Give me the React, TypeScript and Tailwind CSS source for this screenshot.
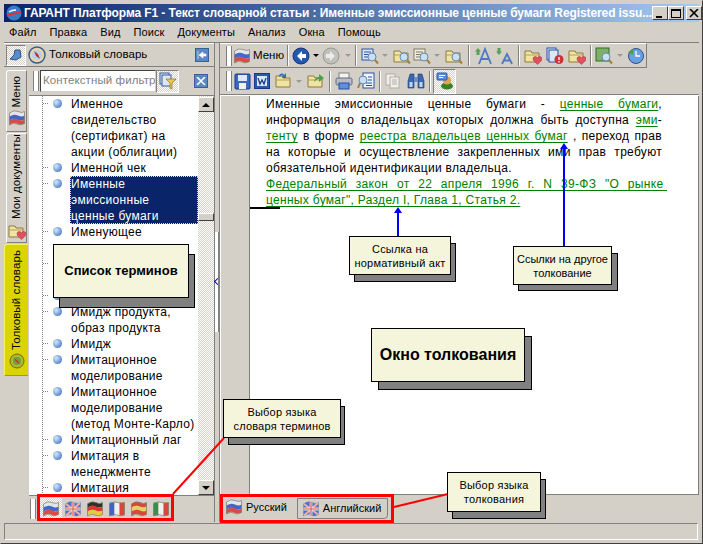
import type { ReactNode } from 'react'

const font = "[font-family:'Liberation_Sans',Arial,sans-serif]"
const dither = 'bg-[repeating-conic-gradient(#d4d0c8_0_25%,#ffffff_0_50%)] bg-[length:2px_2px]'
const outline = 'M.5 3 Q5 -.5 9 1.5 T15.5 1.5 V13.5 Q11 16 8 14 T.5 15 Z'

// wavy flag, stripes top to bottom (or left to right when vertical)
function Flag({ colors, vertical, size = 16 }: { colors: string[]; vertical?: boolean; size?: number }) {
  const wave = (y0: number, y1: number) =>
    `M.5 ${y0 + 1} Q5 ${y0 - 2} 9 ${y0} T15.5 ${y0} V${y1} Q11 ${y1 + 2} 8 ${y1} T.5 ${y1 + 1} Z`
  return (
    <svg width={size} height={size} viewBox="0 0 16 16" className="shrink-0">
      {vertical ? (
        colors.map((c, i) => <rect key={i} x={0.5 + i * 5} y={1.5} width={5} height={13} fill={c} />)
      ) : (
        colors.map((c, i) => <path key={i} d={wave(1.5 + i * 4, 5.5 + i * 4)} fill={c} />)
      )}
      <path d={outline} fill="none" stroke="#7a7a60" strokeWidth=".7" />
    </svg>
  )
}

const RU = ['#e4e4ea', '#3f68c8', '#e04848']

function UKFlag({ size = 16 }: { size?: number }) {
  return (
    <svg width={size} height={size} viewBox="0 0 16 16" className="shrink-0">
      <path d={outline} fill="#4a70c8" stroke="#7080a0" strokeWidth=".6" />
      <path d="M1 3 L15 13.5 M15 2 L1 14.5" stroke="#f0b0a8" strokeWidth="2" />
      <path d="M8 1.5 V14.5 M.5 8 H15.5" stroke="#f4e0d8" strokeWidth="2.8" />
      <path d="M8 1.5 V14.5 M.5 8 H15.5" stroke="#e06058" strokeWidth="1.2" />
    </svg>
  )
}

function Folder({ children }: { children?: ReactNode }) {
  return (
    <svg width="18" height="18" viewBox="0 0 18 18" className="shrink-0">
      <path d="M1 4 H7 L8 6 H15 V15 H1 Z" fill="#f0e4a0" stroke="#8a7a40" />
      <path d="M1 8 H15" stroke="#b0a060" />
      {children}
    </svg>
  )
}

const Heart = () => <path d="M9 12 C9 9 12.5 9 13.5 11 C14.5 9 18 9 18 12 C18 14 15 16 13.5 17.5 C12 16 9 14 9 12 Z" fill="#e05060" stroke="#a03040" strokeWidth=".5" />
const Lens = () => (
  <>
    <circle cx="11" cy="10" r="4" fill="#c8e0f4" stroke="#6888b0" />
    <path d="M14 13 L17 16.5" stroke="#a08040" strokeWidth="2" />
  </>
)

function DocLens({ blue }: { blue?: boolean }) {
  return (
    <svg width="18" height="18" viewBox="0 0 18 18" className="shrink-0">
      <rect x="1" y="2" width="11" height="11" fill={blue ? '#dce8f8' : '#f0ece0'} stroke={blue ? '#2a50a8' : '#807860'} />
      <path d="M3 5 H10 M3 7.5 H8 M3 10 H7" stroke={blue ? '#2a50a8' : '#807860'} />
      <Lens />
    </svg>
  )
}

function FolderLens() {
  return (
    <Folder>
      <Lens />
    </Folder>
  )
}

function Arrow({ dir, disabled }: { dir: 'l' | 'r'; disabled?: boolean }) {
  return (
    <svg width="18" height="18" viewBox="0 0 18 18" className="shrink-0">
      <circle cx="9" cy="9" r="8" fill={disabled ? '#c0c0bc' : '#2458b0'} stroke={disabled ? '#98988f' : '#12357a'} />
      <path d={dir === 'l' ? 'M10 4 L5 9 L10 14 V11 H14 V7 H10 Z' : 'M8 4 L13 9 L8 14 V11 H4 V7 H8 Z'} fill={disabled ? '#ecece8' : '#ffffff'} />
    </svg>
  )
}

function BigA({ up, small }: { up?: boolean; small?: boolean }) {
  return (
    <svg width="18" height="18" viewBox="0 0 18 18" className="shrink-0">
      <path d={small ? 'M6 17 L11 7 L16 17 M8 13.5 H14' : 'M4 17 L10 2 L16 17 M6.5 12 H13.5'} fill="none" stroke="#5078c0" strokeWidth="1.8" />
      <path d={up ? 'M3 1 L6 4.5 H4.5 V8 H1.5 V4.5 H0 Z' : 'M1.5 1 H4.5 V4.5 H6 L3 8 L0 4.5 H1.5 Z'} fill="#58a058" />
    </svg>
  )
}

function Drop({ disabled }: { disabled?: boolean }) {
  return <span className={'ml-[3px] w-0 h-0 border-x-[3px] border-x-transparent border-t-[3px] ' + (disabled ? 'border-t-[#9a9a94]' : 'border-t-black')} />
}

function Sep({ mx = 'mx-[3px]' }: { mx?: string }) {
  return <span className={'w-[2px] h-[21px] shrink-0 border-l border-l-[#808080] border-r border-r-white ' + mx} />
}

function Grip() {
  return <span className="w-[6px] h-[20px] shrink-0 mx-[1px] border-x border-x-[#808080] bg-white" />
}

function Btn({ w = 'w-[20px]', children }: { w?: string; children: ReactNode }) {
  return <span className={'flex items-center justify-center shrink-0 h-[22px] ' + w}>{children}</span>
}

function Callout({ className, shadow, textClass, children }: { className: string; shadow: string; textClass: string; children: ReactNode }) {
  return (
    <div className={'absolute ' + className}>
      <div className={'absolute bg-[#808080] border border-black ' + shadow} />
      <div className={'absolute inset-0 flex items-center justify-center text-center bg-[#f5f5dc] border border-black text-black ' + textClass}>
        {children}
      </div>
    </div>
  )
}

function Link({ children }: { children: ReactNode }) {
  return <span className="text-[#008000] underline underline-offset-[2px]">{children}</span>
}

function Line({ children, className = '' }: { children: ReactNode; className?: string }) {
  return <div className={'h-4 [text-align:justify] [text-align-last:justify] ' + className}>{children}</div>
}

// rows behind the "Список терминов" note have no visible text
const terms: { lines: string[]; selected?: boolean }[] = [
  { lines: ['Именное', 'свидетельство', '(сертификат) на', 'акции (облигации)'] },
  { lines: ['Именной чек'] },
  { lines: ['Именные', 'эмиссионные', 'ценные бумаги'], selected: true },
  { lines: ['Именующее', '\u00a0'] },
  { lines: ['\u00a0', '\u00a0'] },
  { lines: ['\u00a0'] },
  { lines: ['Имидж продукта,', 'образ продукта'] },
  { lines: ['Имидж'] },
  { lines: ['Имитационное', 'моделирование'] },
  { lines: ['Имитационное', 'моделирование', '(метод Монте-Карло)'] },
  { lines: ['Имитационный лаг'] },
  { lines: ['Имитация в', 'менеджменте'] },
  { lines: ['Имитация'] },
]

const menu = ['Файл', 'Правка', 'Вид', 'Поиск', 'Документы', 'Анализ', 'Окна', 'Помощь']

function WinBtn({ children }: { children: ReactNode }) {
  return (
    <span className="flex items-center justify-center w-[16px] h-[14px] bg-[#d4d0c8] border border-t-white border-l-white border-r-[#404040] border-b-[#404040]">
      {children}
    </span>
  )
}

function SideTab({ active, label, icon, h }: { active?: boolean; label: string; icon: ReactNode; h: string }) {
  return (
    <div
      className={
        'flex flex-col items-center justify-end gap-[3px] rounded-tl-[3px] border-l border-t ' +
        (active ? 'w-[24px] ml-0 bg-[#dcd400] border-l-[#f4f060] border-t-[#f4f060] border-b border-b-[#a0a000]' : 'w-[21px] ml-[2px] bg-[#d4d0c8] border-l-white border-t-white border-b border-b-[#808080] border-r border-r-[#808080]') +
        ' ' + h
      }
    >
      <span className="[writing-mode:vertical-rl] rotate-180 text-[11.5px] tracking-[0.1px] leading-none text-black whitespace-nowrap">{label}</span>
      {icon}
    </div>
  )
}

export default function App() {
  return (
    <div className={'relative w-[703px] h-[544px] overflow-hidden bg-[#d4d0c8] flex flex-col pt-[4px] px-[4px] text-black text-[11px] ' + font}>
      {/* window frame */}
      <div className="absolute inset-0 border border-t-[#d4d0c8] border-l-[#d4d0c8] border-r-[#404040] border-b-[#404040] pointer-events-none" />

      {/* title bar */}
      <div className="h-[18px] shrink-0 flex items-center pl-[2px] pr-[2px] bg-gradient-to-r from-[#0a246a] to-[#a6caf0]">
        <svg width="16" height="16" viewBox="0 0 16 16" className="shrink-0">
          <circle cx="8" cy="8" r="7.5" fill="#3a78c8" />
          <path d="M1 10 C5 7 10 8 15 6 V8 C10 10 5 9 1 12 Z" fill="#e03030" />
          <path d="M3 7 C6 5 8 5 10 5" stroke="#fff" strokeWidth="1.5" fill="none" />
        </svg>
        <span className="ml-[2px] flex-1 text-white font-bold text-[12px] tracking-[-0.1px] whitespace-nowrap">
          ГАРАНТ Платформа F1 - Текст словарной статьи : Именные эмиссионные ценные бумаги Registered issu...
        </span>
        <span className="flex items-center shrink-0">
          <WinBtn>
            <span className="w-[6px] h-[2px] bg-black mt-[7px] -ml-[2px]" />
          </WinBtn>
          <WinBtn>
            <span className="w-[10px] h-[9px] border border-black border-t-2" />
          </WinBtn>
          <span className="w-[2px]" />
          <WinBtn>
            <svg width="10" height="9" viewBox="0 0 10 9">
              <path d="M1 0 L9 8 M9 0 L1 8" stroke="#000" strokeWidth="1.6" />
            </svg>
          </WinBtn>
        </span>
      </div>

      {/* menu */}
      <div className="h-[20px] shrink-0 flex items-center pl-[5px] gap-[13px] text-[11px] tracking-[0.1px]">
        {menu.map((m) => (
          <span key={m}>{m}</span>
        ))}
      </div>

      {/* main area */}
      <div className="flex-1 min-h-0 flex border-t border-t-[#808080]">
        {/* left panel */}
        <div className="w-[210px] shrink-0 flex flex-col">
          <div className="h-[24px] shrink-0 flex items-center border-t border-t-white border-b border-b-[#808080]">
            <span className={'w-[20px] h-[21px] flex items-center justify-center ml-[2px] border border-t-[#808080] border-l-[#808080] border-r-white border-b-white ' + dither}>
              <svg width="16" height="16" viewBox="0 0 16 16">
                <path d="M2 12 L6 8 L7 3 L12 3 L13 10 L8 13 Z" fill="#5a8cc8" stroke="#2a5090" />
              </svg>
            </span>
            <svg width="18" height="18" viewBox="0 0 18 18" className="ml-[2px] shrink-0">
              <circle cx="9" cy="9" r="8" fill="#e8d8a0" stroke="#3a5a90" strokeWidth="1.5" />
              <circle cx="9" cy="9" r="5" fill="#b8d0f0" />
              <path d="M6 5 L10 8 L12 13 L8 10 Z" fill="#c03030" />
            </svg>
            <span className="ml-[3px] flex-1 text-[11.5px]">Толковый словарь</span>
            <span className="w-[14px] h-[14px] mr-[5px] bg-[#5a88c0] border border-[#3a6098] flex items-center justify-center text-white">
              <svg width="10" height="8" viewBox="0 0 10 8">
                <path d="M1 0 V8 M2 4 L6 1 V3 H9 V5 H6 V7 Z" fill="#fff" stroke="#fff" strokeWidth=".6" />
              </svg>
            </span>
          </div>
          <div className="flex-1 min-h-0 flex">
            {/* vertical tabs */}
            <div className="w-[25px] shrink-0 flex flex-col pt-[3px] gap-[1px]">
              <SideTab label="Меню" h="h-[62px] pb-[5px]" icon={<Flag colors={RU} />} />
              <SideTab label="Мои документы" h="h-[110px] pb-[2px]" icon={<Folder><Heart /></Folder>} />
              <SideTab
                active
                label="Толковый словарь"
                h="h-[132px] pb-[6px]"
                icon={
                  <svg width="16" height="16" viewBox="0 0 16 16">
                    <circle cx="8" cy="8" r="7" fill="#b0b830" stroke="#607020" />
                    <circle cx="8" cy="8" r="4" fill="#70a040" />
                    <path d="M5 5 L9 8 L11 11 L7 9 Z" fill="#c04020" />
                  </svg>
                }
              />
            </div>
            <div className="flex-1 min-w-0 flex flex-col">
              {/* filter */}
              <div className="h-[28px] shrink-0 flex items-center">
                <span className="ml-[3px]" />
                <Grip />
                <span className="w-[116px] h-[22px] flex items-center pl-[2px] bg-white border border-t-[#404040] border-l-[#404040] border-r-[#d4d0c8] border-b-[#d4d0c8] text-[11.5px] tracking-[0.1px] text-[#808080] whitespace-nowrap">
                  Контекстный фильтр
                </span>
                <span className={'w-[23px] h-[23px] flex items-center justify-center border border-t-[#808080] border-l-[#808080] border-r-white border-b-white ' + dither}>
                  <svg width="18" height="18" viewBox="0 0 18 18">
                    <rect x="1" y="1" width="9" height="11" fill="#dce8f8" stroke="#3a5a98" />
                    <rect x="3" y="3" width="9" height="11" fill="#dce8f8" stroke="#3a5a98" />
                    <path d="M7 7 H17 L13 11 V17 L11 16 V11 Z" fill="#e8c850" stroke="#907020" strokeWidth=".7" />
                  </svg>
                </span>
                <span className="w-[14px] h-[14px] ml-[15px] bg-[#5a88c0] border border-[#3a6098] flex items-center justify-center">
                  <svg width="10" height="8" viewBox="0 0 10 8">
                    <path d="M1 0 L9 8 M9 0 L1 8" stroke="#fff" strokeWidth="1.6" />
                  </svg>
                </span>
              </div>
              {/* term tree */}
              <div className="flex-1 min-h-0 flex bg-white overflow-hidden border-t border-t-[#808080]">
                <div className="relative flex-1 min-w-0 overflow-hidden text-[12px] tracking-[0.3px] leading-4">
                  <div className="absolute left-[13px] top-0 bottom-0 border-l border-dotted border-l-[#808080]" />
                  {terms.map((t, i) => (
                    <div key={i} className="relative flex">
                      <div className="absolute left-[14px] top-[7px] w-[5px] border-t border-dotted border-t-[#808080]" />
                      <span className="absolute left-[24px] top-[3px] w-[9px] h-[9px] rounded-full bg-[radial-gradient(circle_at_35%_35%,#d8e8f8,#5a88d0_70%,#4060a0)]" />
                      <div className={'ml-[41px] flex-1 pl-[1px] ' + (t.selected ? 'bg-[#0a246a] text-white outline-1 -outline-offset-1 outline-dotted outline-[#e8d890]' : '')}>
                        {t.lines.map((l, j) => (
                          <div key={j} className="h-4 whitespace-nowrap">{l}</div>
                        ))}
                      </div>
                    </div>
                  ))}
                </div>
                {/* scrollbar */}
                <div className={'w-[16px] shrink-0 flex flex-col ' + dither}>
                  <span className="h-[15px] mt-[1px] flex items-center justify-center bg-[#d4d0c8] border border-t-white border-l-white border-r-[#404040] border-b-[#404040]">
                    <span className="w-0 h-0 border-x-[4px] border-x-transparent border-b-[4px] border-b-black" />
                  </span>
                  <span className="h-[8px] mt-[101px] bg-[#d4d0c8] border border-t-white border-l-white border-r-[#404040] border-b-[#404040]" />
                  <span className="flex-1" />
                  <span className="h-[15px] flex items-center justify-center bg-[#d4d0c8] border border-t-white border-l-white border-r-[#404040] border-b-[#404040]">
                    <span className="w-0 h-0 border-x-[4px] border-x-transparent border-t-[4px] border-t-black" />
                  </span>
                </div>
              </div>
              {/* dictionary languages */}
              <div className="h-[27px] shrink-0 flex items-center border-t border-t-[#808080]">
                <Grip />
                <span className="ml-[2px] flex items-center">
                  <span className={'w-[22px] h-[22px] ml-[1px] flex items-center justify-center ' + dither}>
                    <Flag colors={RU} />
                  </span>
                  <span className="w-[22px] flex justify-center"><UKFlag /></span>
                  <span className="w-[22px] flex justify-center"><Flag colors={['#303030', '#d83830', '#e8c840']} /></span>
                  <span className="w-[22px] flex justify-center"><Flag vertical colors={['#3868c0', '#f0f0f0', '#d84838']} /></span>
                  <span className="w-[22px] flex justify-center"><Flag colors={['#d84838', '#e8d060', '#d84838']} /></span>
                  <span className="w-[22px] flex justify-center"><Flag vertical colors={['#389048', '#f0f0f0', '#d84838']} /></span>
                </span>
              </div>
            </div>
          </div>
        </div>

        {/* splitter */}
        <div className="w-[6px] shrink-0 flex flex-col border-l border-l-[#808080]">
          <div className="h-[189px] shrink-0 border-r border-r-[#808080]" />
          <div className="h-[100px] shrink-0 bg-white border-r-2 border-r-[#808080] relative">
            <span className="absolute left-0 top-[47px] w-[5px] h-[5px] border-l border-b border-[#0000e0] rotate-45" />
          </div>
          <div className="flex-1 border-r border-r-[#808080]" />
        </div>

        {/* right panel */}
        <div className="flex-1 min-w-0 flex flex-col">
          {/* toolbar 1 */}
          <div className="h-[25px] shrink-0 flex items-center w-[427px] bg-[#d4d0c8] border-t border-t-white border-r border-r-[#808080] border-b border-b-[#808080] pl-[5px]">
            <Grip />
            <Btn w="w-[18px]"><Flag colors={RU} /></Btn>
            <span className="ml-[2px] text-[11.5px]">Меню</span>
            <Sep />
            <Btn w="w-[18px]"><Arrow dir="l" /></Btn>
            <Drop />
            <Btn w="w-[23px]"><Arrow dir="r" disabled /></Btn>
            <Drop disabled />
            <Sep mx="mx-[4px]" />
            <Btn w="w-[18px]"><DocLens blue /></Btn>
            <Drop disabled />
            <Btn w="w-[18px] ml-[5px]"><FolderLens /></Btn>
            <Btn w="w-[18px] ml-[2px]"><DocLens /></Btn>
            <Drop disabled />
            <Btn w="w-[18px] ml-[5px]"><FolderLens /></Btn>
            <Sep mx="ml-[5px] mr-[4px]" />
            <Btn w="w-[20px]"><BigA up /></Btn>
            <Btn w="w-[22px]"><BigA small /></Btn>
            <Sep mx="mx-[2px]" />
            <Btn w="w-[22px]"><Folder><Heart /></Folder></Btn>
            <Btn w="w-[22px]">
              <svg width="18" height="18" viewBox="0 0 18 18">
                <rect x="1" y="1" width="9" height="12" fill="#dce8f8" stroke="#2a50a8" />
                <rect x="3" y="3" width="9" height="12" fill="#dce8f8" stroke="#2a50a8" />
                <circle cx="13" cy="12.5" r="4.5" fill="#d03038" />
                <path d="M13 10 V13 M13 14 V15.5" stroke="#fff" strokeWidth="1.4" />
              </svg>
            </Btn>
            <Btn w="w-[22px]"><Folder><Heart /></Folder></Btn>
            <Sep mx="mx-[2px]" />
            <Btn w="w-[20px]">
              <svg width="18" height="18" viewBox="0 0 18 18">
                <rect x="1" y="1" width="13" height="13" fill="#80b068" stroke="#2a6a2a" />
                <Lens />
              </svg>
            </Btn>
            <Drop disabled />
            <Btn w="w-[25px]">
              <svg width="18" height="18" viewBox="0 0 18 18">
                <circle cx="9" cy="9" r="7.5" fill="#6aa0e0" stroke="#2a5090" />
                <path d="M9 4 V9 H13" stroke="#fff" strokeWidth="1.3" fill="none" />
                <path d="M1 5 L6 2 V8 Z" fill="#48a048" />
              </svg>
            </Btn>
          </div>
          {/* toolbar 2 */}
          <div className="h-[27px] shrink-0 flex items-center pl-[5px] border-b border-b-[#808080]">
            <Grip />
            <Btn w="w-[18px]">
              <svg width="17" height="17" viewBox="0 0 17 17">
                <rect x="1" y="1" width="15" height="15" rx="1" fill="#3a68c0" stroke="#1a3a88" />
                <rect x="4" y="2" width="9" height="6" fill="#e0e8f8" />
                <rect x="5" y="10" width="7" height="6" fill="#f0f0f0" />
              </svg>
            </Btn>
            <Btn w="w-[21px]">
              <svg width="16" height="16" viewBox="0 0 16 16">
                <rect x=".5" y=".5" width="15" height="15" fill="#2a58b0" stroke="#1a3a88" />
                <rect x="3" y="3" width="10" height="10" fill="#dce8f8" />
                <path d="M4 5 L6 11 L8 7 L10 11 L12 5" stroke="#1a3a88" strokeWidth="1.3" fill="none" />
              </svg>
            </Btn>
            <span className="w-[3px]" />
            <Btn w="w-[18px]"><Folder><path d="M4 4 C5 1 8 1 9 3 L11 1 V6 H7 L8 4 C7 3 6 3 5 5 Z" fill="#3a68c0" /></Folder></Btn>
            <Drop disabled />
            <span className="w-[3px]" />
            <Btn w="w-[22px]"><Folder><path d="M7 10 C8 6 10 5 12 5 V2 L17 6 L12 10 V7 C10 7 9 8 7 10 Z" fill="#48a048" /></Folder></Btn>
            <Sep mx="mx-[2px]" />
            <Btn w="w-[22px]">
              <svg width="18" height="18" viewBox="0 0 18 18">
                <rect x="4" y="1" width="10" height="6" fill="#f4f4f0" stroke="#808080" />
                <rect x="1" y="6" width="16" height="7" rx="1.5" fill="#b8bcc8" stroke="#606878" />
                <rect x="4" y="11" width="10" height="6" fill="#6090d8" stroke="#2a50a8" />
              </svg>
            </Btn>
            <Btn w="w-[22px]">
              <svg width="18" height="18" viewBox="0 0 18 18">
                <rect x="6" y="1" width="11" height="15" fill="#f0f4fc" stroke="#2a50a8" />
                <path d="M11 5 H15 M11 8 H15 M9 11 H15 M9 13.5 H15" stroke="#2a50a8" />
                <circle cx="6" cy="8" r="4" fill="#c8e0f4" stroke="#6888b0" />
                <path d="M3 11 L1 16" stroke="#a08040" strokeWidth="2" />
              </svg>
            </Btn>
            <Sep mx="mx-[2px]" />
            <Btn w="w-[20px]">
              <svg width="16" height="16" viewBox="0 0 16 16">
                <rect x="1" y="1" width="9" height="11" fill="#f0eee6" stroke="#b0aea4" />
                <rect x="5" y="4" width="9" height="11" fill="#f0eee6" stroke="#b0aea4" />
                <path d="M7 7 H12 M7 9 H12 M7 11 H12" stroke="#b0aea4" />
              </svg>
            </Btn>
            <Btn w="w-[20px] ml-[3px]">
              <svg width="18" height="18" viewBox="0 0 18 18">
                <path d="M3 2 H7 V16 H1 V9 Z M15 2 H11 V16 H17 V9 Z" fill="#3a68b0" stroke="#1a3a78" strokeWidth=".6" />
                <rect x="7" y="5" width="4" height="5" fill="#6a90c8" />
                <rect x="2.5" y="10" width="3" height="5" fill="#c0d4f0" />
                <rect x="12.5" y="10" width="3" height="5" fill="#c0d4f0" />
              </svg>
            </Btn>
            <Sep mx="ml-[3px] mr-[2px]" />
            <span className={'w-[23px] h-[25px] flex items-center justify-center border border-t-[#808080] border-l-[#808080] border-r-white border-b-white ' + dither}>
              <svg width="18" height="18" viewBox="0 0 18 18">
                <ellipse cx="11" cy="14" rx="6" ry="3.5" fill="#38802a" />
                <circle cx="11" cy="8.5" r="4" fill="#d8a850" />
                <rect x="1" y="1" width="10" height="7" rx="1" fill="#5a90e0" stroke="#2a50a8" />
                <path d="M3 3.5 H9 M3 5.5 H7" stroke="#fff" />
              </svg>
            </span>
          </div>
          {/* document */}
          <div className="flex-1 min-h-0 flex border-t border-t-white">
            <div className="w-[29px] shrink-0 border-l border-l-white" />
            <div className="flex-1 min-w-0 bg-white border-l border-l-[#808080] border-r border-r-[#808080] pl-[16px] text-[12px] tracking-[0.3px] leading-4">
              <div className="w-[396px]">
                <Line>
                  Именные эмиссионные ценные бумаги - <Link>ценные бумаги</Link>,
                </Line>
                <Line>
                  информация о владельцах которых должна быть доступна <Link>эми</Link>-
                </Line>
                <Line>
                  <Link>тенту</Link> в форме <Link>реестра владельцев ценных бумаг</Link> , переход прав
                </Line>
                <Line>на которые и осуществление закрепленных ими прав требуют</Line>
                <div className="h-4 whitespace-nowrap">обязательной идентификации владельца.</div>
                <Line className="w-[401px]">
                  <Link>Федеральный закон от 22 апреля 1996 г. N 39-ФЗ "О рынке&nbsp;</Link>
                </Line>
                <div className="h-4 whitespace-nowrap">
                  <Link>ценных бумаг", Раздел I, Глава 1, Статья 2.</Link>
                </div>
              </div>
            </div>
          </div>
          {/* interpretation languages */}
          <div className="h-[28px] shrink-0 flex items-start border-t border-t-[#808080] pl-[4px] text-[11px]">
            <span className="h-[24px] flex items-center gap-[4px] pl-[2px] pr-[10px]">
              <Flag colors={RU} />
              Русский
            </span>
            <span className="mt-[3px] h-[21px] flex items-center gap-[4px] pl-[5px] pr-[6px] border border-[#808080] rounded-br-[4px]">
              <UKFlag />
              Английский
            </span>
          </div>
        </div>
      </div>

      {/* status bar */}
      <div className="h-[17px] shrink-0 mb-[4px] mt-[1px] mr-[1px] border border-t-[#808080] border-l-[#808080] border-r-white border-b-white" />

      {/* annotations over the window */}
      <div className="absolute left-[250px] top-[207px] w-[30px] h-[2px] bg-black" />
      <div className="absolute left-[37px] top-[494px] w-[137px] h-[27px] border-[3px] border-[#ff0000]" />
      <div className="absolute left-[220px] top-[494px] w-[174px] h-[29px] border-[3px] border-[#ff0000]" />
      <svg className="absolute inset-0 pointer-events-none" width="703" height="544">
        <path d="M173 494 L224 438" stroke="#ff0000" strokeWidth="2" />
        <path d="M394 507 L448 494" stroke="#ff0000" strokeWidth="2" />
        <path d="M398 237 V212" stroke="#0000ff" strokeWidth="2" />
        <path d="M398 207 L402 213 H394 Z" fill="#0000ff" />
        <path d="M564 247 V148" stroke="#0000ff" strokeWidth="2" />
        <path d="M564 143 L568 149 H560 Z" fill="#0000ff" />
      </svg>
      <Callout className="left-[53px] top-[244px] w-[136px] h-[54px]" shadow="left-[6px] top-[10px] -right-[6px] -bottom-[10px]" textClass="font-bold text-[13px]">
        Список терминов
      </Callout>
      <Callout className="left-[223px] top-[399px] w-[118px] h-[39px]" shadow="left-[5px] top-[7px] -right-[4px] -bottom-[7px]" textClass="text-[11px] tracking-[0.2px] leading-[14px]">
        Выбор языка<br />словаря терминов
      </Callout>
      <Callout className="left-[349px] top-[236px] w-[102px] h-[39px]" shadow="left-[5px] top-[7px] -right-[5px] -bottom-[7px]" textClass="text-[11px] tracking-[0.2px] leading-[14px]">
        Ссылка на<br />нормативный акт
      </Callout>
      <Callout className="left-[513px] top-[246px] w-[99px] h-[39px]" shadow="left-[5px] top-[7px] -right-[6px] -bottom-[6px]" textClass="text-[11px] leading-[14px]">
        Ссылки на другое<br />толкование
      </Callout>
      <Callout className="left-[371px] top-[328px] w-[154px] h-[54px]" shadow="left-[7px] top-[8px] -right-[7px] -bottom-[8px]" textClass="font-bold text-[16px]">
        Окно толкования
      </Callout>
      <Callout className="left-[447px] top-[472px] w-[94px] h-[40px]" shadow="left-[5px] top-[7px] -right-[5px] -bottom-[7px]" textClass="text-[11px] tracking-[0.2px] leading-[14px]">
        Выбор языка<br />толкования
      </Callout>
    </div>
  )
}
